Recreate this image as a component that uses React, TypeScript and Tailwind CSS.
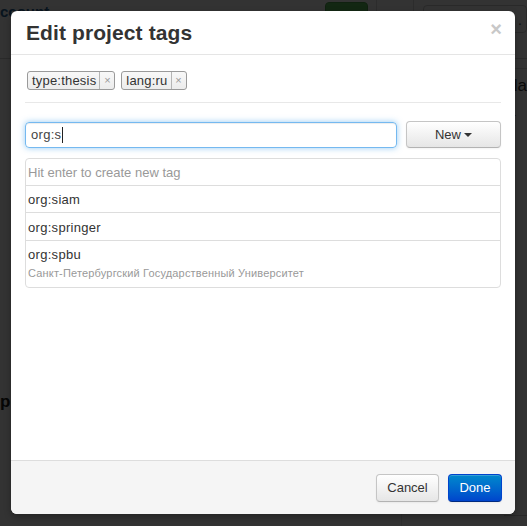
import React from "react";

const font = "font-['Liberation_Sans',Arial,sans-serif]";

function Tag({ label }: { label: string }) {
  return (
    <div className="flex h-[19px] items-stretch rounded-[3px] border border-[#9a9a9a] bg-gradient-to-b from-[#f8f8f8] to-[#ececec] text-[13px] leading-[17px] text-[#333]">
      <span className="pl-[4px] pr-[3px] tracking-[0.2px]">{label}</span>
      <span className="flex w-[15px] items-center justify-center border-l border-[#b5b5b5] text-[11px] text-[#999]">
        ×
      </span>
    </div>
  );
}

function PageBehind() {
  return (
    <div className={`flex h-full w-full flex-col bg-white ${font}`}>
      {/* top navigation */}
      <div className="flex h-[59px] border-b border-[#cfcfcf]">
        <div className="w-[325px] pt-[1px] text-[15px] font-bold text-[#2a6496]">ccount</div>
        <div className="mt-[2px] h-[30px] w-[43px] rounded-[4px] border border-[#51a351] bg-[#62c462]" />
        <div className="w-[8px]" />
        <div className="w-[37px] border-l border-[#dcdcdc]" />
        <div className="flex-1 border-l border-[#dcdcdc] pl-[9px] pt-[5px]">
          <div className="h-[28px] rounded-[4px] border border-[#ccc] pr-[4px] pt-[4px] text-right text-[14px] text-[#555]">
            y: .
          </div>
        </div>
      </div>
      {/* main area */}
      <div className="flex flex-1">
        <div className="flex w-[413px] flex-col pt-[333px]">
          <div className="text-[17px] font-bold leading-[20px] text-[#222]">p</div>
        </div>
        <div className="flex flex-1 flex-col border-l border-[#e5e5e5] pl-[102px]">
          <div className="mt-[9px] border-t border-[#ddd] pt-[7px] text-[17px] leading-[20px] text-[#333]">
            pla
          </div>
          <div className="pt-[14px] text-[13px] leading-[16px] text-[#777]">or</div>
          <div className="flex-1" />
          <div className="font-['Liberation_Serif',serif] text-[18px] font-bold leading-[18px] text-[#333]">S</div>
          <div className="mt-[3px] border-t border-[#ccc] pt-[10px]" />
        </div>
      </div>
    </div>
  );
}

export default function App() {
  return (
    <div className="relative h-[526px] w-[527px] overflow-hidden bg-white">
      <PageBehind />
      <div className="absolute inset-0 bg-black/80" />

      <div
        className={`absolute left-[11px] top-[11px] flex h-[503px] w-[504px] flex-col overflow-hidden rounded-[6px] bg-white shadow-[0_3px_7px_rgba(0,0,0,0.3)] ${font} text-[#333]`}
      >
        {/* header */}
        <div className="flex h-[44px] shrink-0 items-start justify-between border-b border-[#e5e5e5] pl-[15px] pr-[13px] pt-[7px]">
          <h3 className="text-[21px] font-bold leading-[30px] tracking-[0.1px] text-[#333]">Edit project tags</h3>
          <span className="mt-[1px] text-[20px] font-bold leading-[20px] text-[#c8c8c8]">×</span>
        </div>

        {/* body */}
        <div className="flex flex-1 flex-col px-[14px] pt-[16px]">
          <div className="flex gap-[6px] pl-[2px]">
            <Tag label="type:thesis" />
            <Tag label="lang:ru" />
          </div>
          <div className="mt-[12px] border-t border-[#e8e8e8]" />

          <div className="mt-[18px] flex items-end gap-[9px]">
            <div className="flex h-[26px] w-[372px] items-center rounded-[4px] border border-[rgba(82,168,236,0.8)] pl-[5px] text-[13px] shadow-[inset_0_1px_1px_rgba(0,0,0,0.075),0_0_6px_rgba(82,168,236,0.6)]">
              <span className="tracking-[0.3px] text-[#444]">org:s</span>
              <span className="ml-[1px] h-[16px] w-[1px] bg-[#222]" />
            </div>
            <button className="flex h-[27px] w-[95px] items-center justify-center gap-[3px] rounded-[4px] border border-[#c5c5c5] border-b-[#b3b3b3] bg-gradient-to-b from-white to-[#e6e6e6] text-[13px] text-[#333] shadow-[inset_0_1px_0_rgba(255,255,255,0.2),0_1px_2px_rgba(0,0,0,0.05)]">
              New
              <span className="mt-[1px] h-0 w-0 border-x-[4px] border-t-[4px] border-x-transparent border-t-[#333]" />
            </button>
          </div>

          <div className="mt-[10px] flex flex-col rounded-[4px] border border-[#ddd] text-[13px]">
            <div className="flex h-[27px] items-center border-b border-[#ddd] pl-[2px] pt-[2px] text-[#999]">
              Hit enter to create new tag
            </div>
            <div className="flex h-[27px] items-center border-b border-[#ddd] pl-[2px] pt-[2px] tracking-[0.3px] text-[#333]">
              org:siam
            </div>
            <div className="flex h-[28px] items-center border-b border-[#ddd] pl-[2px] pt-[2px] tracking-[0.3px] text-[#333]">
              org:springer
            </div>
            <div className="flex h-[46px] flex-col pl-[2px] pt-[4px]">
              <span className="leading-[20px] tracking-[0.3px] text-[#333]">org:spbu</span>
              <span className="text-[11px] leading-[17px] tracking-[0.17px] text-[#999]">
                Санкт-Петербургский Государственный Университет
              </span>
            </div>
          </div>
        </div>

        {/* footer */}
        <div className="flex h-[54px] shrink-0 items-start justify-end gap-[9px] border-t border-[#ddd] bg-[#f5f5f5] pr-[13px] pt-[13px]">
          <button className="h-[28px] w-[63px] rounded-[4px] border border-[#c5c5c5] border-b-[#b3b3b3] bg-gradient-to-b from-white to-[#e6e6e6] text-[13px] text-[#333] shadow-[inset_0_1px_0_rgba(255,255,255,0.2),0_1px_2px_rgba(0,0,0,0.05)]">
            Cancel
          </button>
          <button className="h-[28px] w-[54px] rounded-[4px] border border-[#0044cc] border-b-[#002a80] bg-gradient-to-b from-[#0088cc] to-[#0044cc] text-[13px] text-white shadow-[inset_0_1px_0_rgba(255,255,255,0.2),0_1px_2px_rgba(0,0,0,0.05)]">
            Done
          </button>
        </div>
      </div>
    </div>
  );
}
